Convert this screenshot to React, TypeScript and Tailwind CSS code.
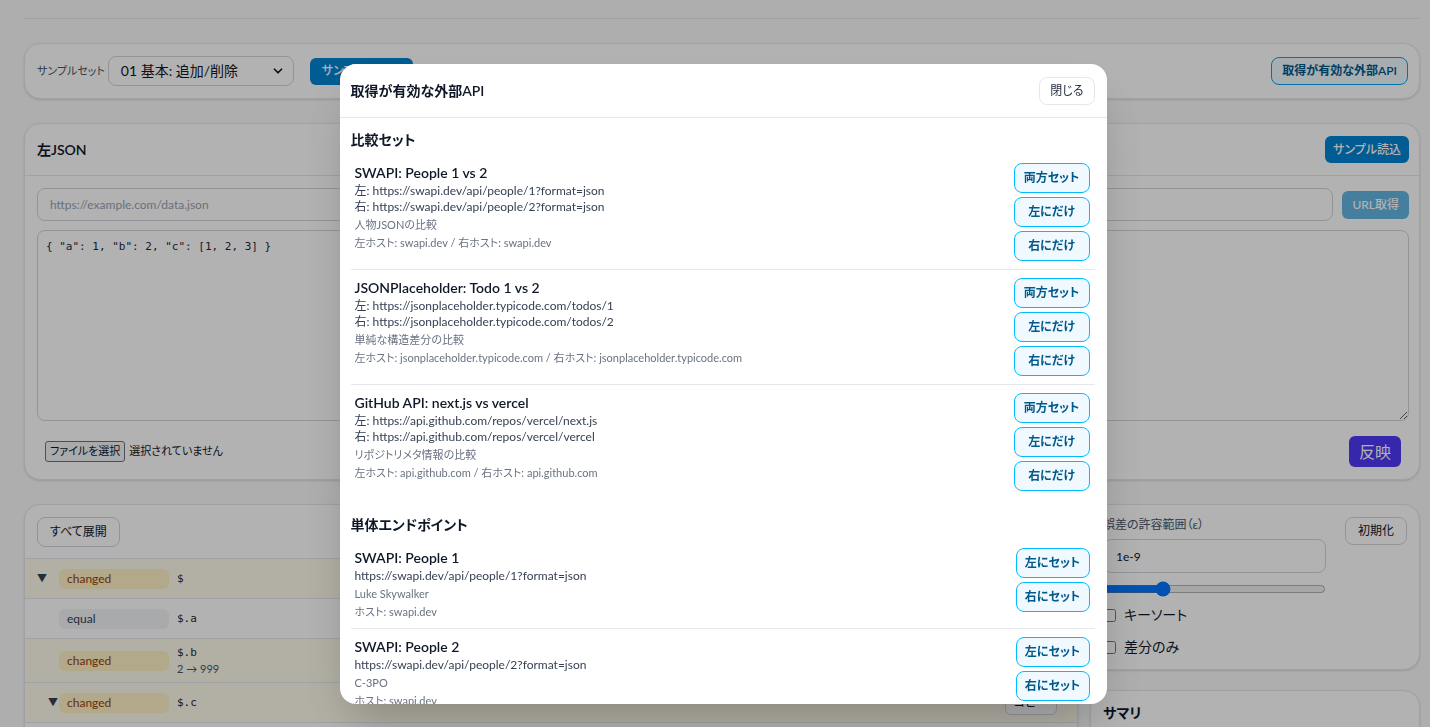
import { ChevronDown } from 'lucide-react';

interface CompareSet {
    title: string;
    left: string;
    right: string;
    note: string;
    leftHost: string;
    rightHost: string;
}

interface Endpoint {
    title: string;
    url: string;
    note: string;
    host: string;
}

const compareSets: CompareSet[] = [
    {
        title: 'SWAPI: People 1 vs 2',
        left: 'https://swapi.dev/api/people/1?format=json',
        right: 'https://swapi.dev/api/people/2?format=json',
        note: '人物JSONの比較',
        leftHost: 'swapi.dev',
        rightHost: 'swapi.dev',
    },
    {
        title: 'JSONPlaceholder: Todo 1 vs 2',
        left: 'https://jsonplaceholder.typicode.com/todos/1',
        right: 'https://jsonplaceholder.typicode.com/todos/2',
        note: '単純な構造差分の比較',
        leftHost: 'jsonplaceholder.typicode.com',
        rightHost: 'jsonplaceholder.typicode.com',
    },
    {
        title: 'GitHub API: next.js vs vercel',
        left: 'https://api.github.com/repos/vercel/next.js',
        right: 'https://api.github.com/repos/vercel/vercel',
        note: 'リポジトリメタ情報の比較',
        leftHost: 'api.github.com',
        rightHost: 'api.github.com',
    },
];

const endpoints: Endpoint[] = [
    { title: 'SWAPI: People 1', url: 'https://swapi.dev/api/people/1?format=json', note: 'Luke Skywalker', host: 'swapi.dev' },
    { title: 'SWAPI: People 2', url: 'https://swapi.dev/api/people/2?format=json', note: 'C-3PO', host: 'swapi.dev' },
    { title: 'JSONPlaceholder: Todo 1', url: 'https://jsonplaceholder.typicode.com/todos/1', note: 'delectus aut autem', host: 'jsonplaceholder.typicode.com' },
];

const diffRows = [
    { kind: 'changed', path: '$', toggle: 'root', sub: '' },
    { kind: 'equal', path: '$.a', toggle: '', sub: '' },
    { kind: 'changed', path: '$.b', toggle: '', sub: '2 → 999' },
    { kind: 'changed', path: '$.c', toggle: 'child', sub: '' },
    { kind: 'equal', path: '$.c[0]', toggle: '', sub: '' },
];

const setButton = 'h-[30px] rounded-lg border border-sky-400 bg-sky-50 px-2 text-xs font-semibold text-sky-800';

function JsonPanel({ title }: { title: string }) {
    return (
        <section className="rounded-2xl border border-gray-200 bg-white shadow-sm">
            <div className="flex h-[52px] items-center justify-between border-b border-gray-200 pl-3 pr-[10px]">
                <h2 className="text-sm font-semibold">{title}</h2>
                <button className="h-[27px] rounded-md bg-sky-600 px-2 text-xs font-medium text-white">サンプル読込</button>
            </div>
            <div className="py-3 pl-3 pr-[10px]">
                <div className="flex items-center gap-[9px]">
                    <input
                        className="h-[33px] flex-1 rounded-lg border border-gray-300 px-3 text-xs placeholder:text-gray-400"
                        placeholder="https://example.com/data.json"
                    />
                    <button className="h-[28px] rounded-md bg-sky-600 px-2.5 text-xs font-medium text-white opacity-60">URL取得</button>
                </div>
                <textarea
                    readOnly
                    className="mt-[9px] block h-[191px] w-full rounded-lg border border-gray-300 p-2 font-['DejaVu_Sans_Mono',monospace] text-[11px] leading-4 text-gray-800"
                    value={title === '左JSON' ? '{ "a": 1, "b": 2, "c": [1, 2, 3] }' : ''}
                />
                <div className="mt-[15px] flex items-center justify-between">
                    <div className="ml-2 flex items-center gap-1 text-[11px]">
                        <span className="rounded-[3px] border border-gray-500 bg-gray-100 px-1 py-px">ファイルを選択</span>
                        <span>選択されていません</span>
                    </div>
                    <button className="mr-2 h-[31px] rounded-md bg-indigo-600 px-2.5 text-base leading-none text-white">反映</button>
                </div>
            </div>
        </section>
    );
}

export default function App() {
    return (
        <div className="relative h-screen overflow-hidden bg-gray-50 font-['Lato','Noto_Sans_CJK_JP',sans-serif] text-gray-900 [font-feature-settings:'palt']">
            <div className="pl-6 pr-[10px]">
                <div className="h-[19px] border-b border-gray-200" />

                <div className="mt-6 flex flex-col gap-6">
                    {/* Toolbar */}
                    <section className="flex h-[56px] items-center rounded-2xl border border-gray-200 bg-white pl-3 pr-[11px] shadow-sm">
                        <span className="text-[11px] text-gray-600">サンプルセット</span>
                        <div className="ml-[3px] flex h-[30px] w-[186px] items-center justify-between rounded-lg border border-gray-300 pl-3 pr-2 text-sm">
                            <span>01 基本: 追加/削除</span>
                            <ChevronDown size={14} strokeWidth={3} />
                        </div>
                        <button className="ml-4 h-[27px] rounded-md bg-sky-600 px-3 text-xs font-medium text-white">サンプルを適用</button>
                        <button className="ml-auto h-[28px] rounded-lg border border-sky-500 bg-sky-50 px-[10px] text-xs font-semibold text-sky-800">
                            取得が有効な外部API
                        </button>
                    </section>

                    {/* JSON inputs */}
                    <div className="grid grid-cols-2 gap-3">
                        <JsonPanel title="左JSON" />
                        <JsonPanel title="右JSON" />
                    </div>

                    {/* Diff tree + settings */}
                    <div className="grid grid-cols-[1fr_330px] items-start gap-3">
                        <section className="overflow-hidden rounded-2xl border border-gray-200 bg-white shadow-sm">
                            <div className="flex h-[54px] items-center border-b border-gray-200 px-3">
                                <button className="h-[30px] rounded-lg border border-gray-300 px-3 text-xs">すべて展開</button>
                            </div>
                            {diffRows.map((row) => (
                                <div
                                    key={row.path}
                                    className={
                                        row.kind === 'changed'
                                            ? 'flex min-h-[40px] items-center border-b border-gray-200 bg-amber-50 py-1.5 pl-3 pr-5'
                                            : 'flex min-h-[40px] items-center border-b border-gray-200 py-1.5 pl-3 pr-5'
                                    }
                                >
                                    <span className={row.toggle === 'child' ? 'w-[22px] pl-[11px] text-[10px] text-gray-700' : 'w-[22px] text-[10px] text-gray-700'}>
                                        {row.toggle ? '▼' : ''}
                                    </span>
                                    <span
                                        className={
                                            row.kind === 'changed'
                                                ? 'flex h-5 w-[110px] items-center rounded-md bg-amber-100 px-2 text-xs text-amber-800'
                                                : 'flex h-5 w-[110px] items-center rounded-md bg-gray-100 px-2 text-xs text-gray-700'
                                        }
                                    >
                                        {row.kind}
                                    </span>
                                    <div className="ml-2 flex flex-col">
                                        <span className="font-['DejaVu_Sans_Mono',monospace] text-[11px] leading-4 text-gray-800">{row.path}</span>
                                        {row.sub && <span className="text-[11px] leading-[15px] text-gray-600">{row.sub}</span>}
                                    </div>
                                    <button className="ml-auto h-[25px] rounded-md border border-gray-300 bg-white px-2 text-xs">コピー</button>
                                </div>
                            ))}
                        </section>

                        <div className="flex flex-col gap-5">
                            <section className="flex justify-between rounded-2xl border border-gray-200 bg-white px-3 pb-3 pt-3 shadow-sm">
                                <div className="w-[223px]">
                                    <div className="text-xs leading-4 text-gray-600">誤差の許容範囲（ε）</div>
                                    <input
                                        className="mt-1.5 h-[34px] w-full rounded-lg border border-gray-300 px-3 text-xs"
                                        defaultValue="1e-9"
                                    />
                                    <input type="range" className="mt-2 block w-full" defaultValue={25} />
                                    <label className="mt-2 flex h-5 items-center gap-2 text-sm">
                                        <input type="checkbox" />
                                        キーソート
                                    </label>
                                    <label className="mt-3 flex h-5 items-center gap-2 text-sm">
                                        <input type="checkbox" />
                                        差分のみ
                                    </label>
                                </div>
                                <button className="h-[28px] rounded-lg border border-gray-300 px-3 text-xs">初期化</button>
                            </section>
                            <section className="h-[200px] rounded-2xl border border-gray-200 bg-white px-3 pt-3 shadow-sm">
                                <h2 className="text-sm font-semibold">サマリ</h2>
                            </section>
                        </div>
                    </div>
                </div>
            </div>

            {/* Modal */}
            <div className="fixed inset-0 flex justify-center bg-black/30 pl-[16px] pt-16">
                <div className="flex h-[640px] w-[767px] flex-col overflow-hidden rounded-2xl bg-white shadow-2xl">
                    <div className="flex h-[54px] shrink-0 items-center justify-between border-b border-gray-200 pl-[11px] pr-3">
                        <h2 className="text-sm font-semibold">取得が有効な外部API</h2>
                        <button className="h-[28px] rounded-lg border border-gray-200 px-[10px] text-xs text-gray-800">閉じる</button>
                    </div>
                    <div className="overflow-hidden pl-[11px] pr-3 pt-3">
                        <h3 className="mb-[5px] text-sm font-semibold leading-5">比較セット</h3>
                        <div className="divide-y divide-gray-200">
                            {compareSets.map((set) => (
                                <div key={set.title} className="flex items-start justify-between gap-3 py-2 pl-1 pr-[5px]">
                                    <div className="min-w-0">
                                        <div className="text-sm font-semibold leading-5">{set.title}</div>
                                        <div className="text-xs leading-4 text-gray-700">左: {set.left}</div>
                                        <div className="text-xs leading-4 text-gray-700">右: {set.right}</div>
                                        <div className="mt-0.5 text-[11px] leading-4 text-gray-500">{set.note}</div>
                                        <div className="mt-0.5 text-[11px] leading-4 text-gray-500">
                                            左ホスト: {set.leftHost} / 右ホスト: {set.rightHost}
                                        </div>
                                    </div>
                                    <div className="flex w-[76px] shrink-0 flex-col gap-1">
                                        <button className={setButton}>両方セット</button>
                                        <button className={setButton}>左にだけ</button>
                                        <button className={setButton}>右にだけ</button>
                                    </div>
                                </div>
                            ))}
                        </div>

                        <h3 className="mb-[5px] mt-4 text-sm font-semibold leading-5">単体エンドポイント</h3>
                        <div className="divide-y divide-gray-200">
                            {endpoints.map((ep) => (
                                <div key={ep.title} className="flex items-start justify-between gap-3 py-2 pl-1 pr-[5px]">
                                    <div className="min-w-0">
                                        <div className="text-sm font-semibold leading-5">{ep.title}</div>
                                        <div className="text-xs leading-4 text-gray-700">{ep.url}</div>
                                        <div className="mt-0.5 text-[11px] leading-4 text-gray-500">{ep.note}</div>
                                        <div className="mt-0.5 text-[11px] leading-4 text-gray-500">ホスト: {ep.host}</div>
                                    </div>
                                    <div className="flex w-[74px] shrink-0 flex-col gap-1">
                                        <button className={setButton}>左にセット</button>
                                        <button className={setButton}>右にセット</button>
                                    </div>
                                </div>
                            ))}
                        </div>
                    </div>
                </div>
            </div>
        </div>
    );
}
